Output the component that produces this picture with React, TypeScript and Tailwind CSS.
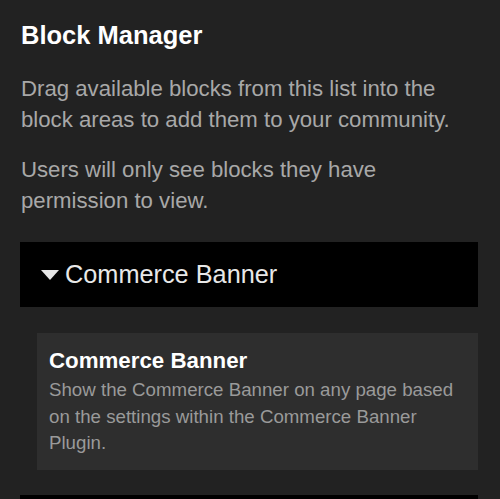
export default function App() {
  return (
    <div
      className="w-[500px] h-[499px] overflow-hidden bg-[#222222] pl-[20px] pr-[22px] pt-[20px]"
      style={{ fontFamily: '"Liberation Sans", Arial, sans-serif' }}
    >
      <h1 className="text-[25.5px] leading-[30px] font-bold text-white pl-[1px]">Block Manager</h1>
      <p className="mt-[24px] text-[22.2px] leading-[30.5px] text-[#a8a8a8] pl-[1px]">
        Drag available blocks from this list into the block areas to add them to your community.
      </p>
      <p className="mt-[20px] text-[22.2px] leading-[30.5px] text-[#a8a8a8] pl-[1px]">
        Users will only see blocks they have permission to view.
      </p>
      <div className="mt-[26px] h-[65px] bg-black flex items-center pl-[21px] gap-[6px]">
        <svg width="18" height="10" viewBox="0 0 18 10" className="shrink-0">
          <polygon points="0,0 18,0 9,10" fill="#e6e6e6" />
        </svg>
        <span className="text-[25.3px] text-[#e8e8e8]">Commerce Banner</span>
      </div>
      <div className="mt-[26px] ml-[17px] bg-[#2e2e2e] pl-[12px] pr-[12px] pt-[14px] pb-[13px]">
        <div className="text-[22.3px] leading-[28px] font-bold text-white">Commerce Banner</div>
        <p className="mt-[2px] text-[18.7px] leading-[26.5px] text-[#9a9a9a]">
          Show the Commerce Banner on any page based on the settings within the Commerce Banner Plugin.
        </p>
      </div>
      <div className="mt-[25px] h-[60px] bg-black" />
    </div>
  );
}
